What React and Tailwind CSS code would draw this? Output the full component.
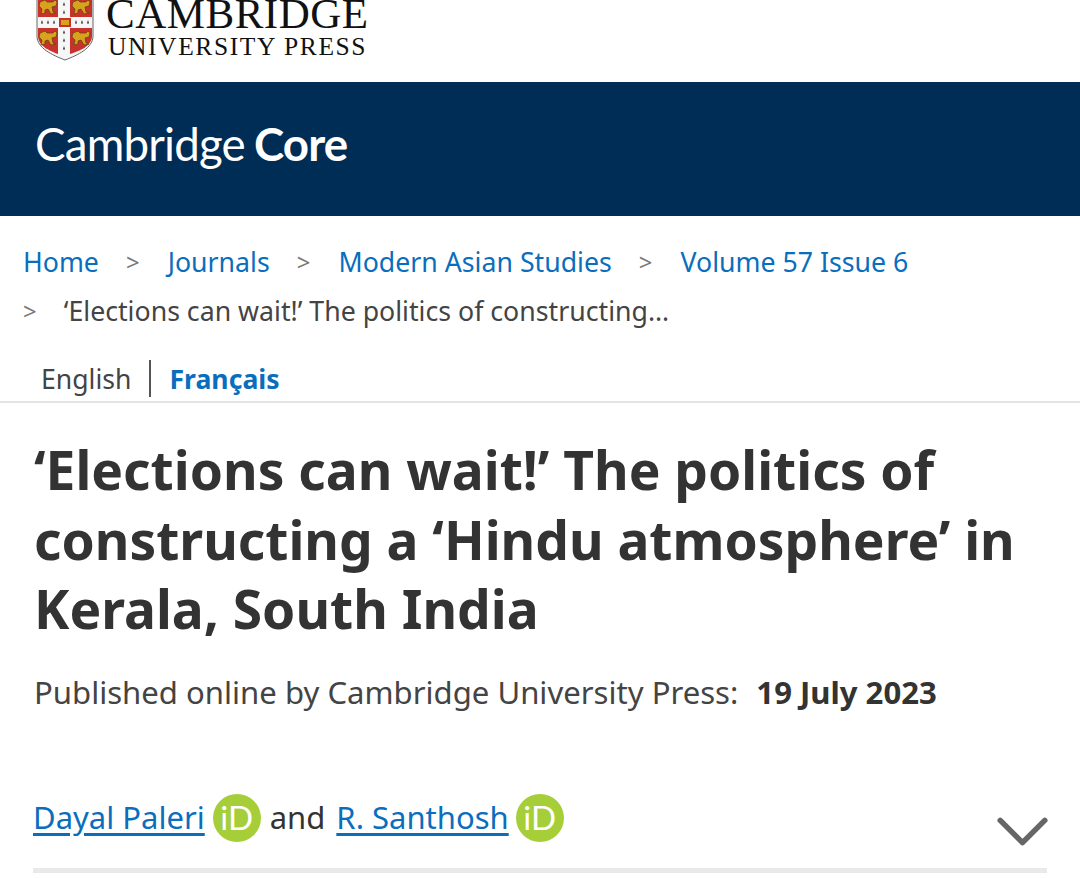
import React from 'react';
import { ChevronDown } from 'lucide-react';

// simplified heraldic lion, drawn around 0,0
function Lion({ x, y }) {
    return (
        <g transform={`translate(${x} ${y})`} fill="#d9a21e" stroke="#5a4210" strokeWidth="0.7">
            <path d="M-8 -5 L-3 -7 L-1 -5 L5 -5 L7 -7 L9 -5 L8 -1 L4 0 L5 5 L8 6 L3 7 L0 2 L-3 3 L-3 6 L-7 7 L-6 2 L-9 -1 Z" />
        </g>
    );
}

function Ermine({ x, y }) {
    return <path d={`M${x} ${y - 2} L${x + 1} ${y + 1.5} L${x - 1} ${y + 1.5} Z`} fill="#222" />;
}

function Shield() {
    return (
        <svg width="58" height="61" viewBox="0 0 58 61" className="block">
            <path d="M1 -4 H57 V36 C57 48 42 55 29 60 C16 55 1 48 1 36 Z" fill="#f6f6f6" stroke="#666" strokeWidth="1" />
            <path d="M2 -4 H22 V17 H2 Z M34 -4 H56 V17 H34 Z" fill="#c8322b" />
            <path d="M2 28 H22 V54 C14 51 2 46 2 36 Z M34 28 H56 V36 C56 46 44 51 34 54 Z" fill="#c8322b" />
            <rect x="23" y="18" width="12" height="9" fill="#c8322b" />
            <rect x="25" y="20" width="8" height="5" fill="#d9a21e" />
            <Lion x={12} y={7} />
            <Lion x={45} y={7} />
            <Lion x={12} y={38} />
            <Lion x={45} y={38} />
            {[6, 12, 18, 40, 46, 52].map(x => <Ermine key={x} x={x} y={22} />)}
            {[4, 12, 32, 40, 48].map(y => <Ermine key={y} x={28} y={y} />)}
        </svg>
    );
}

function OrcidBadge() {
    return (
        <span className="w-[48px] h-[48px] rounded-full bg-[#a6ce39] flex items-center justify-center text-white text-[33px] leading-none font-['Lato',sans-serif] font-normal">
            iD
        </span>
    );
}

function Sep({ className }) {
    return <span className={`text-[#777] text-[24px] ${className}`}>&gt;</span>;
}

export default function App() {
    return (
        <div className="w-[1080px] h-[879px] overflow-hidden bg-white font-['Noto_Sans','Open_Sans',sans-serif] text-[#333]">
            <header className="h-[82px] pl-[36px] flex items-start gap-[12px] overflow-hidden">
                <Shield />
                <div className="font-['Liberation_Serif',serif] text-[#111] whitespace-nowrap -mt-[4px]">
                    <div className="text-[43px] leading-[36px] tracking-[0.5px]">CAMBRIDGE</div>
                    <div className="text-[25.5px] leading-[28px] tracking-[1.6px] ml-[2px] mt-[1px]">UNIVERSITY PRESS</div>
                </div>
            </header>

            <div className="h-[134px] bg-[#002d56] pl-[35px] flex items-center text-white font-['Lato',sans-serif] text-[45.7px] tracking-[-0.8px] pb-[9px]">
                <span className="font-normal">Cambridge</span>
                <span className="font-bold ml-[9px]">Core</span>
            </div>

            <nav className="pl-[23px] pt-[26px] text-[26.7px] leading-[40px] whitespace-nowrap">
                <div className="flex items-center h-[40px]">
                    <a className="text-[#0a6ebd]">Home</a>
                    <Sep className="ml-[27px] mr-[28px]" />
                    <a className="text-[#0a6ebd]">Journals</a>
                    <Sep className="ml-[27px] mr-[28px]" />
                    <a className="text-[#0a6ebd]">Modern Asian Studies</a>
                    <Sep className="ml-[27px] mr-[28px]" />
                    <a className="text-[#0a6ebd]">Volume 57 Issue 6</a>
                </div>
                <div className="flex items-center h-[40px] mt-[9px]">
                    <Sep className="mr-[27px]" />
                    <span className="text-[#444]">‘Elections can wait!’ The politics of constructing…</span>
                </div>
            </nav>

            <div className="h-[43px] mt-[29px] pl-[41px] border-b-2 border-[#e4e4e4] flex items-start text-[26.6px] leading-[38px]">
                <span className="text-[#444]">English</span>
                <span className="w-[2px] h-[37px] bg-[#555] ml-[18px] mr-[18px]" />
                <span className="font-bold text-[#0a6ebd]">Français</span>
            </div>

            <h1 className="pl-[34px] pt-[32px] w-[1040px] text-[53.3px] leading-[69.5px] font-bold text-[#333]">
                ‘Elections can wait!’ The politics of constructing a ‘Hindu atmosphere’ in Kerala, South India
            </h1>

            <p className="pl-[34px] mt-[28px] text-[31.1px] leading-[40px] whitespace-nowrap text-[#444]">
                Published online by Cambridge University Press:
                <span className="font-bold text-[#333] ml-[18px]">19 July 2023</span>
            </p>

            <div className="mt-[81px] pl-[33px] pr-[33px]">
                <div className="flex items-center h-[50px] text-[31px] text-[#333]">
                    <a className="text-[#0a6ebd] underline underline-offset-4">Dayal Paleri</a>
                    <span className="ml-[8px]"><OrcidBadge /></span>
                    <span className="ml-[9px] mr-[11px]">and</span>
                    <a className="text-[#0a6ebd] underline underline-offset-4">R. Santhosh</a>
                    <span className="ml-[7px]"><OrcidBadge /></span>
                    <ChevronDown className="ml-auto shrink-0 mr-[-20px] mt-[28px] text-[#666]" size={89} strokeWidth={1.5} />
                </div>
                <div className="h-[5px] mt-[25px] bg-[#e9e9e9]" />
            </div>
        </div>
    );
}
